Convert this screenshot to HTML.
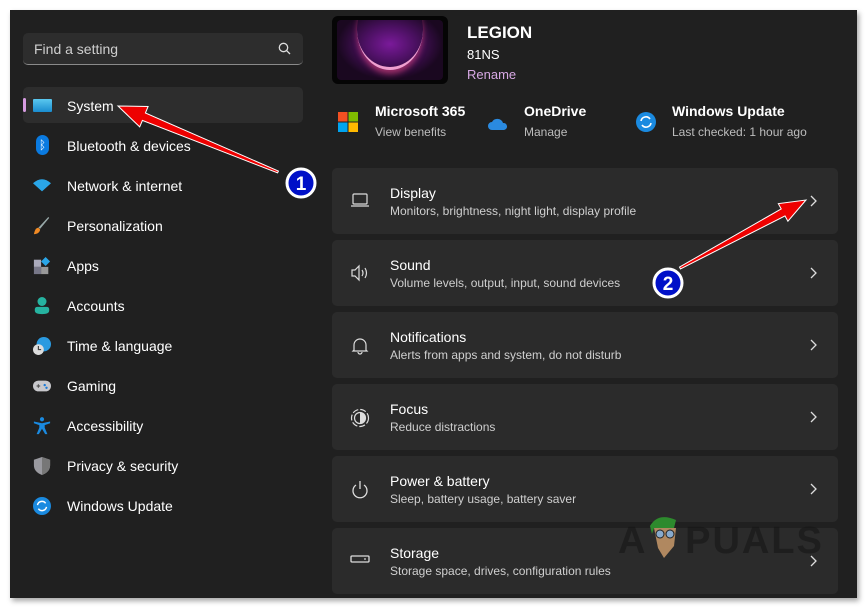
<!DOCTYPE html>
<html><head><meta charset="utf-8"><style>
*{margin:0;padding:0;box-sizing:border-box}
body{width:868px;height:609px;background:#fff;position:relative;overflow:hidden;font-family:"Segoe UI","Liberation Sans",sans-serif;color:#fff}
#win{position:absolute;left:10px;top:10px;width:847px;height:588px;background:#202020;box-shadow:2px 3px 5px rgba(0,0,0,.35);overflow:hidden}
.a{position:absolute}
.search{left:13px;top:23px;width:280px;height:32px;background:#2d2d2d;border-radius:5px;border-bottom:1px solid #8a8a8a;font-size:14px;color:#cfcfcf;padding:8px 11px}
.nav{left:13px;width:280px;height:36px;font-size:14px;line-height:38px;padding-left:44px}
.nav.sel{background:#2d2d2d;border-radius:5px}
.ic{position:absolute;left:10px;top:10px;width:18px;height:18px}
.card{left:322px;width:506px;height:66px;background:#2b2b2b;border-radius:5px}
.card .t{position:absolute;left:58px;top:17px;font-size:14px}
.card .s{position:absolute;left:58px;top:36px;font-size:12px;color:#cfcfcf}
.card .chev{position:absolute;left:476px;top:26px}
.card svg.ci{position:absolute;left:18px;top:24px}
.top .h{font-size:14px;font-weight:bold}
.top .sub{font-size:12px;color:#bdbdbd}
</style></head><body>
<div id="win">
<div class="a search">Find a setting
<svg class="a" style="left:255px;top:9px" width="13" height="13" viewBox="0 0 13 13"><circle cx="5.5" cy="5.5" r="4.2" fill="none" stroke="#ddd" stroke-width="1.3"/><path d="M8.6 8.6L12 12" stroke="#ddd" stroke-width="1.3"/></svg></div>

<div class="a nav sel" style="top:77px"><div class="a" style="left:0;top:11px;width:3px;height:14px;background:#d69be0;border-radius:2px"></div>
<div class="ic" style="background:linear-gradient(#5bc8ef,#1a8ccf);height:13px;top:12px;width:19px;border-radius:1px"></div>System</div>
<div class="a nav" style="top:117px"><div class="ic" style="background:#0a7ae0;border-radius:7px;width:13px;left:13px;top:8px;height:20px;color:#fff;font-size:12px;line-height:20px;text-align:center">ᛒ</div>Bluetooth &amp; devices</div>
<div class="a nav" style="top:157px"><svg class="ic" viewBox="0 0 20 18"><path d="M0 6Q10-3 20 6L10 15Z" fill="#2aa6e8"/></svg>Network &amp; internet</div>
<div class="a nav" style="top:197px"><svg class="ic" viewBox="0 0 20 20"><path d="M18 1L8 13l-2-1L17 0Z" fill="#9aa"/><path d="M6 12c-3 0-4 3-5 7 3 0 6-1 7-5Z" fill="#f08a24"/></svg>Personalization</div>
<div class="a nav" style="top:237px"><svg class="ic" viewBox="0 0 20 20"><rect x="1" y="3" width="8" height="8" fill="#aab"/><rect x="1" y="11" width="8" height="8" fill="#778"/><rect x="9" y="11" width="8" height="8" fill="#999"/><path d="M14 0l5 5-5 5-5-5Z" fill="#2aa6e8"/></svg>Apps</div>
<div class="a nav" style="top:277px"><svg class="ic" viewBox="0 0 20 20"><circle cx="10" cy="5" r="5" fill="#26b3a0"/><path d="M2 14q0-3 3-3h10q3 0 3 3v1q0 4-8 4t-8-4Z" fill="#26b3a0"/></svg>Accounts</div>
<div class="a nav" style="top:317px"><svg class="ic" viewBox="0 0 20 20"><circle cx="12" cy="8" r="8" fill="#2a9ae0"/><circle cx="6" cy="14" r="6" fill="#ddd"/><path d="M6 10v4h3" stroke="#444" fill="none" stroke-width="1.3"/></svg>Time &amp; language</div>
<div class="a nav" style="top:357px"><svg class="ic" viewBox="0 0 20 20"><rect x="0" y="4" width="20" height="12" rx="6" fill="#c8c8cc"/><circle cx="13" cy="9" r="1.3" fill="#1a7ad8"/><circle cx="15" cy="12" r="1.3" fill="#1a7ad8"/><path d="M4 10h4M6 8v4" stroke="#555" stroke-width="1.3"/></svg>Gaming</div>
<div class="a nav" style="top:397px"><svg class="ic" viewBox="0 0 20 20"><circle cx="10" cy="2.5" r="2.3" fill="#1a8ae0"/><path d="M1 5l9 2 9-2v2l-6 2v3l3 7h-2.5L10 13l-3.5 6H4l3-7V9L1 7Z" fill="#1a8ae0"/></svg>Accessibility</div>
<div class="a nav" style="top:437px"><svg class="ic" viewBox="0 0 20 20"><path d="M10 0l9 3v6c0 6-4 9-9 11C5 18 1 15 1 9V3Z" fill="#9a9aa0"/><path d="M10 0l9 3v6c0 6-4 9-9 11Z" fill="#777"/></svg>Privacy &amp; security</div>
<div class="a nav" style="top:477px"><svg class="ic" viewBox="0 0 20 20"><circle cx="10" cy="10" r="10" fill="#1a8ae0"/><path d="M5 9a5 5 0 0 1 9-2M15 11a5 5 0 0 1-9 2" stroke="#fff" stroke-width="1.6" fill="none"/></svg>Windows Update</div>

<div class="a" style="left:322px;top:6px;width:116px;height:68px;border-radius:6px;background:#050505;overflow:hidden">
<div class="a" style="left:5px;top:4px;width:106px;height:60px;border-radius:4px;background:radial-gradient(ellipse at 50% 40%,#7a1a9a 0,#4a1060 35%,#1a0820 70%),#120818;overflow:hidden"><div class="a" style="left:20px;top:-30px;width:66px;height:80px;border-radius:50%;border-bottom:3px solid #f0a0d0;box-shadow:0 4px 6px rgba(255,80,140,.5)"></div></div></div>
<div class="a" style="left:457px;top:13px;font-size:17px;font-weight:bold">LEGION</div>
<div class="a" style="left:457px;top:37px;font-size:13px">81NS</div>
<div class="a" style="left:457px;top:57px;font-size:13px;color:#d7a8e4">Rename</div>

<div class="a top" style="left:328px;top:93px"><svg class="a" style="left:0;top:9px" width="20" height="20"><rect width="9.5" height="9.5" fill="#f25022"/><rect x="10.5" width="9.5" height="9.5" fill="#7fba00"/><rect y="10.5" width="9.5" height="9.5" fill="#00a4ef"/><rect x="10.5" y="10.5" width="9.5" height="9.5" fill="#ffb900"/></svg>
<div class="a h" style="left:37px;top:0;white-space:nowrap">Microsoft&nbsp;365</div><div class="a sub" style="left:37px;top:22px;white-space:nowrap">View benefits</div></div>
<div class="a top" style="left:478px;top:93px"><svg class="a" style="left:0;top:14px" width="20" height="14" viewBox="0 0 20 14"><path d="M4 13a4 4 0 0 1 0-8 6 6 0 0 1 11 1 3.5 3.5 0 0 1 1 7Z" fill="#2a8ae0"/></svg>
<div class="a h" style="left:36px;top:0">OneDrive</div><div class="a sub" style="left:36px;top:22px">Manage</div></div>
<div class="a top" style="left:626px;top:93px"><svg class="a" style="left:0;top:9px" width="20" height="20"><circle cx="10" cy="10" r="10" fill="#1a8ae0"/><path d="M5 9a5 5 0 0 1 9-2M15 11a5 5 0 0 1-9 2" stroke="#fff" stroke-width="1.6" fill="none"/></svg>
<div class="a h" style="left:36px;top:0;white-space:nowrap">Windows Update</div><div class="a sub" style="left:36px;top:22px;white-space:nowrap">Last checked: 1 hour ago</div></div>

<div class="a card" style="top:158px"><svg class="ci" width="20" height="16"><rect x="3" y="2" width="14" height="10" rx="1" fill="none" stroke="#ddd" stroke-width="1.2"/><path d="M1 14h18" stroke="#ddd" stroke-width="1.2"/></svg><div class="t">Display</div><div class="s">Monitors, brightness, night light, display profile</div><svg class="chev" width="10" height="14"><path d="M3 2l5 5-5 5" stroke="#ddd" fill="none" stroke-width="1.3"/></svg></div>
<div class="a card" style="top:230px"><svg class="ci" width="20" height="18"><path d="M2 6h3l4-4v14l-4-4H2Z" fill="none" stroke="#ddd" stroke-width="1.2"/><path d="M12 6q2 3 0 6M15 4q3 5 0 10" fill="none" stroke="#ddd" stroke-width="1.2"/></svg><div class="t">Sound</div><div class="s">Volume levels, output, input, sound devices</div><svg class="chev" width="10" height="14"><path d="M3 2l5 5-5 5" stroke="#ddd" fill="none" stroke-width="1.3"/></svg></div>
<div class="a card" style="top:302px"><svg class="ci" width="20" height="20"><path d="M4 14V9a6 6 0 0 1 12 0v5l1 1H3Z M8 16a2 2 0 0 0 4 0" fill="none" stroke="#ddd" stroke-width="1.2"/></svg><div class="t">Notifications</div><div class="s">Alerts from apps and system, do not disturb</div><svg class="chev" width="10" height="14"><path d="M3 2l5 5-5 5" stroke="#ddd" fill="none" stroke-width="1.3"/></svg></div>
<div class="a card" style="top:374px"><svg class="ci" width="20" height="20"><circle cx="10" cy="10" r="8.5" fill="none" stroke="#ddd" stroke-width="1.2" stroke-dasharray="6 2"/><circle cx="10" cy="10" r="5.5" fill="none" stroke="#ddd" stroke-width="1.2"/><path d="M10 4.5a5.5 5.5 0 0 1 0 11Z" fill="#ddd"/></svg><div class="t">Focus</div><div class="s">Reduce distractions</div><svg class="chev" width="10" height="14"><path d="M3 2l5 5-5 5" stroke="#ddd" fill="none" stroke-width="1.3"/></svg></div>
<div class="a card" style="top:446px"><svg class="ci" width="20" height="20"><path d="M6 5a7 7 0 1 0 8 0M10 1v8" fill="none" stroke="#ddd" stroke-width="1.3"/></svg><div class="t">Power &amp; battery</div><div class="s">Sleep, battery usage, battery saver</div><svg class="chev" width="10" height="14"><path d="M3 2l5 5-5 5" stroke="#ddd" fill="none" stroke-width="1.3"/></svg></div>
<div class="a card" style="top:518px"><svg class="ci" width="20" height="14"><rect x="1" y="4" width="18" height="6" rx="1" fill="none" stroke="#ddd" stroke-width="1.3"/><circle cx="15" cy="7" r=".9" fill="#ddd"/></svg><div class="t">Storage</div><div class="s">Storage space, drives, configuration rules</div><svg class="chev" width="10" height="14"><path d="M3 2l5 5-5 5" stroke="#ddd" fill="none" stroke-width="1.3"/></svg></div>

<div class="a" style="left:608px;top:510px;font-size:38px;font-weight:bold;color:rgba(20,20,20,.55);letter-spacing:2px;font-family:'Liberation Sans',sans-serif">A&nbsp;&nbsp;&nbsp;PUALS</div>
<svg class="a" style="left:636px;top:502px" width="36" height="50"><path d="M4 14q8-14 26-6l-2 8H8l-2 6Z" fill="#2d8a2d"/><path d="M8 16h22l-2 18-10 12-6-10Z" fill="#b08860"/><circle cx="14" cy="22" r="4" fill="#8ac" stroke="#222"/><circle cx="24" cy="22" r="4" fill="#8ac" stroke="#222"/></svg>
</div>

<svg class="a" style="left:0;top:0;position:absolute" width="868" height="609">
<polygon points="278.4,171.1 145.4,113 148.1,106.5 118,106 139.7,126.9 142.4,120.4 277.6,172.9" fill="#e00" stroke="#fff" stroke-width="1"/>
<polygon points="680.5,268.9 785,215.9 787.9,221.2 806,200 778.3,203.6 781.2,208.9 679.5,267.1" fill="#e00" stroke="#fff" stroke-width="1"/>
<circle cx="301" cy="183" r="14" fill="#0010c8" stroke="#fff" stroke-width="3"/><text x="301" y="190" fill="#fff" font-size="19" font-weight="bold" text-anchor="middle" font-family="Liberation Sans">1</text>
<circle cx="668" cy="283" r="14" fill="#0010c8" stroke="#fff" stroke-width="3"/><text x="668" y="290" fill="#fff" font-size="19" font-weight="bold" text-anchor="middle" font-family="Liberation Sans">2</text>
</svg>
</body></html>
